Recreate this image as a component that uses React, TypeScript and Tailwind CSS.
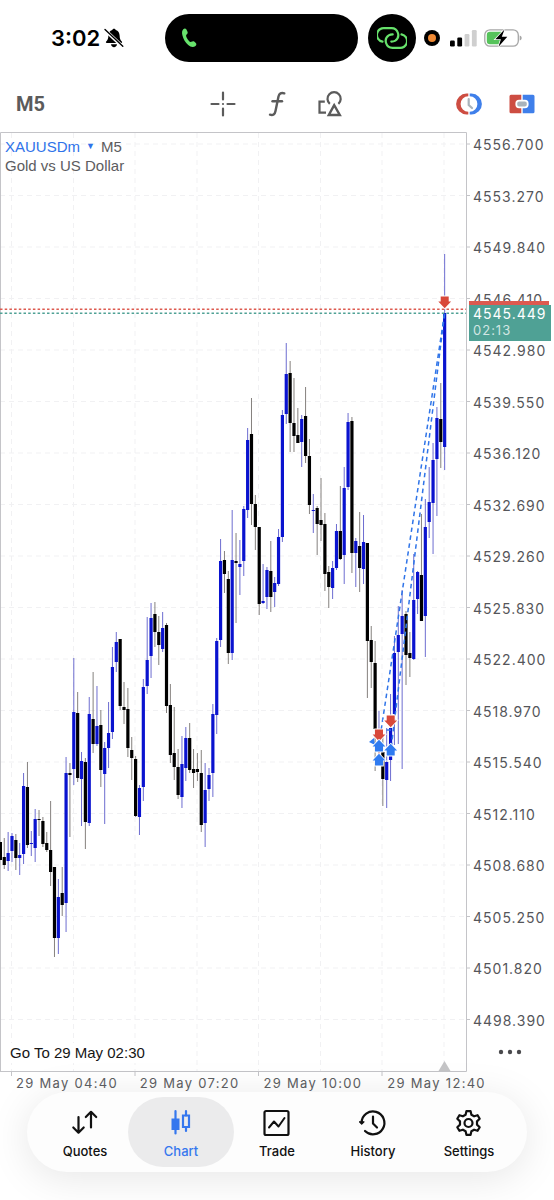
import type { ReactNode } from "react"
import clsx from "clsx"

type Candle = [high: number, top: number, bottom: number, low: number, up: 0 | 1]

// high, body top, body bottom, low, 1 = bullish
const candles: Candle[] = [
  [843, 843, 861, 861, 0], [839, 858, 866, 870, 0], [833, 854, 862, 872, 1], [834, 837, 852, 863, 1],
  [835, 841, 859, 871, 0], [844, 856, 859, 876, 1], [774, 787, 855, 865, 1], [763, 788, 846, 849, 0],
  [832, 844, 845, 857, 1], [810, 820, 849, 863, 1], [811, 820, 821, 837, 0], [818, 822, 845, 848, 0],
  [833, 844, 851, 853, 0], [802, 851, 873, 887, 0], [868, 868, 939, 958, 0], [880, 898, 939, 955, 1],
  [868, 894, 906, 917, 0], [758, 774, 904, 933, 1], [764, 774, 776, 838, 0], [659, 713, 770, 786, 1],
  [693, 714, 779, 783, 0], [753, 762, 780, 827, 1], [759, 763, 823, 850, 0], [698, 715, 824, 827, 1],
  [673, 720, 745, 754, 0], [687, 727, 745, 747, 1], [711, 726, 771, 788, 0], [743, 749, 775, 825, 1],
  [703, 734, 749, 769, 1], [648, 668, 733, 740, 1], [633, 643, 663, 673, 1], [640, 640, 707, 711, 0],
  [683, 708, 711, 725, 0], [689, 710, 749, 758, 0], [738, 751, 759, 781, 0], [757, 760, 817, 818, 0],
  [786, 789, 818, 836, 1], [680, 688, 788, 802, 1], [618, 661, 687, 695, 1], [604, 619, 657, 679, 1],
  [603, 615, 633, 648, 0], [617, 633, 646, 666, 0], [613, 629, 650, 653, 1], [624, 626, 707, 714, 0],
  [685, 706, 756, 764, 0], [708, 754, 768, 781, 0], [750, 768, 796, 800, 0], [737, 765, 798, 809, 1],
  [728, 739, 769, 782, 1], [724, 739, 771, 774, 0], [750, 770, 774, 789, 0], [754, 770, 773, 782, 0],
  [751, 774, 826, 833, 0], [764, 791, 824, 848, 1], [769, 776, 790, 802, 1], [705, 715, 774, 798, 1],
  [639, 642, 716, 735, 1], [540, 562, 641, 648, 1], [552, 561, 575, 594, 0], [572, 580, 654, 665, 0],
  [511, 561, 654, 661, 1], [534, 562, 564, 624, 0], [541, 565, 568, 596, 1], [507, 510, 562, 577, 1],
  [429, 441, 511, 519, 1], [399, 435, 505, 526, 0], [496, 505, 528, 551, 0], [528, 528, 605, 616, 0],
  [565, 602, 604, 605, 1], [568, 571, 598, 610, 1], [542, 572, 598, 613, 0], [578, 584, 593, 608, 1],
  [530, 538, 585, 587, 1], [411, 416, 538, 543, 1], [344, 375, 415, 425, 1], [362, 374, 424, 453, 0],
  [379, 424, 437, 453, 0], [409, 436, 444, 444, 0], [416, 420, 443, 468, 1], [388, 417, 457, 464, 0],
  [440, 457, 506, 515, 0], [495, 511, 512, 534, 1], [507, 509, 525, 556, 0], [479, 521, 526, 542, 0],
  [514, 525, 575, 592, 0], [567, 573, 588, 609, 0], [562, 569, 589, 600, 1], [525, 532, 569, 571, 1],
  [487, 532, 560, 561, 0], [468, 489, 556, 585, 1], [414, 423, 488, 491, 1], [418, 422, 554, 574, 0],
  [539, 542, 554, 588, 1], [513, 547, 569, 593, 0], [516, 543, 570, 585, 1], [544, 544, 642, 699, 0],
  [627, 641, 663, 689, 0], [642, 664, 730, 772, 0], [712, 736, 738, 760, 1], [737, 753, 780, 807, 0],
  [729, 763, 781, 809, 1], [695, 729, 761, 782, 1], [637, 654, 715, 746, 1], [607, 636, 653, 745, 1],
  [591, 617, 635, 770, 1], [612, 615, 656, 686, 0], [633, 654, 659, 678, 0], [555, 601, 660, 661, 1],
  [572, 573, 600, 615, 1], [515, 576, 622, 622, 0], [500, 528, 617, 658, 1], [468, 503, 523, 539, 1],
  [444, 461, 504, 555, 1], [408, 419, 460, 517, 1], [384, 420, 443, 469, 0], [255, 314, 448, 471, 1],
]

const prices = [
  "4556.700", "4553.270", "4549.840", "4546.410", "4542.980", "4539.550", "4536.120", "4532.690", "4529.260",
  "4525.830", "4522.400", "4518.970", "4515.540", "4512.110", "4508.680", "4505.250", "4501.820", "4498.390",
]

const times = ["29 May 04:40", "29 May 07:20", "29 May 10:00", "29 May 12:40"]

const gridX = [11.5, 73.5, 135, 197, 258.5, 320.5, 382, 444]

function TradeArrow({ x, y, down }: { x: number; y: number; down?: boolean }) {
  return (
    <path
      d="M0 -6.2 L6.4 0.4 H4 V5.6 H-4 V0.4 H-6.4 Z"
      transform={`translate(${x} ${y}) scale(1 ${down ? -1 : 1})`}
      fill={down ? "#d8483a" : "#2f7bf0"}
      stroke="#fff"
      strokeWidth="1.6"
      paintOrder="stroke"
    />
  )
}

function CandleChart() {
  return (
    <svg
      viewBox="0 134 466 938"
      preserveAspectRatio="none"
      className="block h-[938px] w-full overflow-visible"
      role="img"
      aria-label="XAUUSDm M5 candles"
    >
      <g stroke="#f1f1f3" strokeWidth="1" strokeDasharray="5 4">
        {gridX.map((x) => (
          <line key={x} x1={x} x2={x} y1="134" y2="1072" />
        ))}
        {prices.map((p, i) => (
          <line key={p} x1="0" x2="466" y1={145 + i * 51.5} y2={145 + i * 51.5} />
        ))}
      </g>
      <g stroke="#c4c4c8" strokeWidth="1">
        {prices.map((p, i) => (
          <line key={p} x1="466" x2="470" y1={145 + i * 51.5} y2={145 + i * 51.5} />
        ))}
        {[0, 2, 4, 6].map((i) => (
          <line key={i} x1={gridX[i]} x2={gridX[i]} y1="1072" y2="1077" />
        ))}
        <path d="M0.5 1072 V133.5 H466.5 V1072.5 H0" fill="none" />
      </g>
      <path d="M438.5 1072 L444.5 1062 L450.5 1072 Z" fill="#c4c4c6" />

      {candles.map(([high, top, bottom, low, up], i) => {
        const x = 0.4 + i * 3.863
        return (
          <g key={i}>
            <line x1={x} x2={x} y1={high} y2={low} stroke={up ? "#5c5ccb" : "#77736f"} strokeWidth="0.9" />
            <rect x={x - 1.6} y={top} width="3.2" height={Math.max(bottom - top, 1)} fill={up ? "#0a13cf" : "#000"} />
          </g>
        )
      })}

      <line x1="0" x2="466" y1="310.3" y2="310.3" stroke="#dd5a4f" strokeWidth="1.4" strokeDasharray="2.5 2.2" />
      <line x1="0" x2="466" y1="314.3" y2="314.3" stroke="#4fa195" strokeWidth="1.4" strokeDasharray="2.5 2.2" />

      <g stroke="#2f74e8" strokeWidth="1.5" strokeDasharray="4.5 3.5" fill="none">
        <path d="M444.5 315 L379 745" />
        <path d="M444.5 315 L391 750" />
        <path d="M391 731 L379 731" />
      </g>
      <path d="M379 740 V756" stroke="#d8483a" strokeWidth="1.2" />
      <path d="M369 743 L374 739 L375 746 Z" fill="#2f7bf0" />
      <TradeArrow x={444.7} y={303} down />
      <TradeArrow x={390.7} y={722} down />
      <TradeArrow x={379} y={736} down />
      <TradeArrow x={379} y={747} />
      <TradeArrow x={379} y={761} />
      <TradeArrow x={390.7} y={751} />
    </svg>
  )
}

function StatusBar() {
  return (
    <header className="flex h-19 items-center pr-8 text-black">
      <div className="flex w-[165px] items-center gap-1 pl-[51px]">
        <span className="text-[22px] leading-7 font-semibold">3:02</span>
        <svg viewBox="0 0 20 20" className="size-5">
          <path d="M10 .8c1 0 1.600.6 1.700 1.300C14.300 3 15.500 5 15.600 7.500c.1 3.600.9 4.600 2.200 6 .6.700.3 1.500-.6 1.500H2.800c-.9 0-1.200-.8-.6-1.500 1.300-1.400 2.100-2.400 2.200-6C4.500 5 5.700 3 8.300 2.100 8.400 1.400 9 .8 10 .8Z" />
          <path d="M7 16.300h6c-.2 1.700-1.400 2.900-3 2.900s-2.800-1.200-3-2.900Z" />
          <path d="M1.200 2.200 18.500 18.500" stroke="#fff" strokeWidth="3.400" />
          <path d="M1 1.500 18.800 18.200" stroke="#000" strokeWidth="1.400" strokeLinecap="round" />
        </svg>
      </div>
      <div className="flex h-12 flex-1 items-center rounded-full bg-black pl-4">
        <svg viewBox="0 0 16 20" className="h-5 w-4" fill="#67e26c">
          <path d="M2.300 1.200C3.300.3 4.600.2 5.300 1.300L6.500 3.700C7 4.800 6.500 5.600 5.600 6.500c-.7.7-.6 1.500-.1 2.700.6 1.300 1.500 2.700 2.500 3.800.8.8 1.500 1.100 2.300.7 1.200-.6 2-.8 2.900-.1l1.600 1.400c.9.9.700 2-.3 2.900-1.800 1.600-4.700 1.600-7.300-.8C4.500 14.700 2.200 11 1.400 7.300.8 4.700.9 2.500 2.300 1.200Z" />
        </svg>
      </div>
      <div className="ml-2.5 flex size-12 items-center justify-center rounded-full bg-black">
        <svg viewBox="0 0 30 24" className="h-6 w-[30px]" fill="none" stroke="#67e26c" strokeWidth="2.200" strokeLinecap="round">
          <path d="M5.500 15.600A6.800 6.800 0 0 1 8 2.200h6.500a6.800 6.800 0 0 1 3.800 12.400c-1.300.8-2.500 1-4 1" />
          <path d="M24.500 8.400A6.800 6.800 0 0 1 22 21.800h-6.500a6.800 6.800 0 0 1-3.800-12.400c1.300-.8 2.500-1 4-1" />
        </svg>
      </div>
      <span className="ml-2 flex size-4 items-center justify-center rounded-full bg-black">
        <span className="size-2 rounded-full bg-[#f08a35]" />
      </span>
      <svg viewBox="0 0 28 17" className="ml-2.5 h-[17px] w-7">
        <rect x="0" y="10.500" width="4.800" height="6" rx="1.200" />
        <rect x="7.300" y="7.500" width="4.800" height="9" rx="1.200" />
        <rect x="14.600" y="4" width="4.800" height="12.500" rx="1.200" fill="#cfcfcf" />
        <rect x="21.900" y="0" width="4.800" height="16.500" rx="1.200" fill="#cfcfcf" />
      </svg>
      <svg viewBox="0 0 38 18" className="ml-1.5 h-[18px] w-[38px]">
        <rect x=".8" y=".8" width="33.500" height="16.400" rx="5.200" fill="#fff" stroke="#a6a6a6" strokeWidth="1.300" />
        <path d="M6 2.800H17V15.200H6A3.200 3.200 0 0 1 2.800 12V6A3.200 3.200 0 0 1 6 2.800Z" fill="#56c35b" />
        <path d="M35.700 6.500c1.400.4 2 1.300 2 2.500s-.6 2.100-2 2.500Z" fill="#a6a6a6" />
        <path d="M20.500.5 11.300 10.200h5.600L14.500 17.700 23.300 7.800h-5.500Z" stroke="#fff" strokeWidth="1.500" paintOrder="stroke" />
      </svg>
    </header>
  )
}

function Toolbar() {
  return (
    <div className="flex h-14 items-center pr-[19px] text-[#5b5b5b]">
      <div className="w-[210px] pl-4">
        <button className="font-['Roboto',sans-serif] text-xl leading-7 font-bold">M5</button>
      </div>
      <div className="flex items-center gap-8">
        <button aria-label="Crosshair">
          <svg viewBox="0 0 26 26" className="size-[26px]" stroke="currentColor" strokeWidth="2.200" strokeLinecap="round">
            <path d="M13 1.500V8.500M13 17.500V24.500M1.500 13H8.500M17.500 13H24.500" />
            <path d="M13 13v.01" />
          </svg>
        </button>
        <button aria-label="Indicators">
          <svg viewBox="0 0 18 26" className="h-[26px] w-[18px]" fill="none" stroke="currentColor" strokeWidth="2.400" strokeLinecap="round">
            <path d="M16.300 2.300C13.300 1.300 11.200 2.300 10.500 5.500L7.500 20C6.900 23.300 5 24.700 2 23.700" />
            <path d="M4.500 10.200H14" />
          </svg>
        </button>
        <button aria-label="Objects">
          <svg viewBox="0 0 25 26" className="h-[26px] w-[25px]" fill="none" stroke="currentColor" strokeWidth="2.200">
            <path d="M6.800 10.600H1.500V21.700H8" />
            <path d="M11.800 12.800A6.600 6.600 0 1 1 20.400 12.800" />
            <path d="M16.200 14.200 10.800 24H21.800Z" strokeWidth="2.400" />
          </svg>
        </button>
      </div>
      <div className="ml-auto flex items-center gap-[27px]">
        <button aria-label="Sessions">
          <svg viewBox="0 0 26 22" className="h-[22px] w-[26px]">
            <path d="M12.300.6H10.500A10.400 10.400 0 0 0 10.500 21.400H12.300V18.700A7.700 7.700 0 0 1 12.300 3.300Z" fill="#cd4d42" />
            <path d="M13.700.6H15.500A10.400 10.400 0 0 1 15.500 21.400H13.700V18.700A7.700 7.700 0 0 0 13.700 3.300Z" fill="#3f7fea" />
            <path d="M12.700 6.200V12L16 15" fill="none" stroke="#a9b3bb" strokeWidth="2.200" strokeLinecap="round" />
          </svg>
        </button>
        <button aria-label="One click trading">
          <svg viewBox="0 0 26 20" className="h-5 w-[26px]">
            <path d="M2 .8H12.300V19.200H2A1.500 1.500 0 0 1 .5 17.700V2.300A1.500 1.500 0 0 1 2 .8Z" fill="#cd4d42" />
            <path d="M13.700.8H24A1.500 1.500 0 0 1 25.500 2.300V17.700A1.500 1.500 0 0 1 24 19.200H13.700Z" fill="#3f7fea" />
            <rect x="7.300" y="6.600" width="11.400" height="6.800" rx="2.800" fill="#a9b3bb" stroke="#fff" strokeWidth="1.800" />
          </svg>
        </button>
      </div>
    </div>
  )
}

const line = { fill: "none", stroke: "currentColor", strokeWidth: 2.2, strokeLinecap: "round", strokeLinejoin: "round" } as const

const tabs: { label: string; icon: ReactNode }[] = [
  {
    label: "Quotes",
    icon: (
      <g {...line}>
        <path d="M7.500 8V23.500M2.300 18.500 7.500 23.700 12.700 18.500" />
        <path d="M20 18.500V3M14.800 8 20 2.800 25.200 8" />
      </g>
    ),
  },
  {
    label: "Chart",
    icon: (
      <g>
        <path d="M8.500 2V24.500" {...line} />
        <path d="M4.500 9.500H12.500V21H4.500Z" fill="currentColor" />
        <path d="M19 2V6.500M19 18.500V22" {...line} />
        <path d="M16 6.500H22V18H16Z" {...line} strokeLinejoin="miter" />
      </g>
    ),
  },
  {
    label: "Trade",
    icon: (
      <g {...line}>
        <rect x="1.500" y="2" width="24" height="24" rx="1.500" />
        <path d="M6 18.500 11 12.500 15.500 17.500 21.500 9" strokeWidth="2" />
      </g>
    ),
  },
  {
    label: "History",
    icon: (
      <g {...line}>
        <path d="M2.600 13.600A11.400 11.400 0 1 1 6 22" />
        <path d="M.4 12.800H5L2.700 15.200Z" fill="currentColor" strokeWidth="1.200" />
        <path d="M14 7.500V14.500L18 18.500" />
      </g>
    ),
  },
  {
    label: "Settings",
    icon: (
      <g {...line}>
        <path d="M11.400 2.200H15.600L16.400 5.800 19.100 7.300 22.600 6.200 24.700 9.800 22 12.400V15.600L24.700 18.200 22.600 21.800 19.100 20.700 16.400 22.200 15.600 25.800H11.400L10.600 22.200 7.900 20.700 4.400 21.800 2.300 18.200 5 15.600V12.400L2.300 9.800 4.400 6.200 7.900 7.300 10.600 5.800Z" />
        <circle cx="13.500" cy="14" r="4" />
      </g>
    ),
  },
]

function TabBar() {
  return (
    <nav className="relative mx-[27px] grid grid-cols-5 rounded-full bg-[#fdfdfd] px-2.5 py-[5px] shadow-[0_6px_40px_rgba(0,0,0,0.1)]">
      {tabs.map(({ label, icon }) => {
        const active = label === "Chart"
        return (
          <button
            key={label}
            aria-current={active ? "page" : undefined}
            className={clsx(
              "-mx-[5px] flex h-[70px] flex-col items-center gap-1 rounded-full pt-3",
              active ? "bg-[#ebebec] text-[#3577ee]" : "text-[#111]",
            )}
          >
            <svg viewBox="0 0 28 28" className="size-7">
              {icon}
            </svg>
            <span className="text-[13px] leading-5 font-medium">{label}</span>
          </button>
        )
      })}
    </nav>
  )
}

export default function App() {
  return (
    <div className="min-h-screen overflow-hidden bg-white pb-7 font-['Inter',sans-serif]">
      <StatusBar />
      <Toolbar />

      <main className="mt-px flex">
        <section className="relative min-w-0 flex-1">
          <CandleChart />
          <div className="absolute top-1 left-[5px] font-['Liberation_Sans',sans-serif] text-[15px] leading-[19px] text-[#5c5c60]">
            <button className="flex items-center">
              <span className="text-[#2f73ea]">XAUUSDm</span>
              <span className="mx-1.5 text-[9px] text-[#2f73ea]">▼</span>
              <span>M5</span>
            </button>
            <p>Gold vs US Dollar</p>
          </div>
          <button className="absolute bottom-2 left-2.5 bg-white font-['Liberation_Sans',sans-serif] text-[15px] leading-5 text-[#161616]">
            Go To 29 May 02:30
          </button>
        </section>

        <aside className="relative w-[88px] text-sm leading-5 tracking-[1px] text-[#55565a]">
          <ul className="flex h-[898px] flex-col justify-between pt-0.5 pl-[7px]">
            {prices.map((p) => (
              <li key={p}>{p}</li>
            ))}
          </ul>
          <div className="absolute top-[168px] left-[3px] h-2 w-20 bg-[#dd5a50]" />
          <div className="absolute top-[172px] left-[3px] w-[82px] bg-[#4fa195] pb-[3px] pl-1 text-white">
            <p className="leading-[18px]">4545.449</p>
            <p className="text-[13px] leading-[15px] text-white/75">02:13</p>
          </div>
          <button aria-label="More" className="mt-4 ml-8">
            <svg viewBox="0 0 24 10" className="h-2.5 w-6" fill="#4a4a4d">
              <circle cx="3" cy="5" r="2.200" />
              <circle cx="12" cy="5" r="2.200" />
              <circle cx="21" cy="5" r="2.200" />
            </svg>
          </button>
        </aside>
      </main>

      <div className="grid h-[21px] grid-cols-4 pt-0.5 pr-[43px] pl-4 text-[13px] leading-5 tracking-widest whitespace-nowrap text-[#5d5e62]">
        {times.map((t) => (
          <span key={t}>{t}</span>
        ))}
      </div>
      <TabBar />
    </div>
  )
}
